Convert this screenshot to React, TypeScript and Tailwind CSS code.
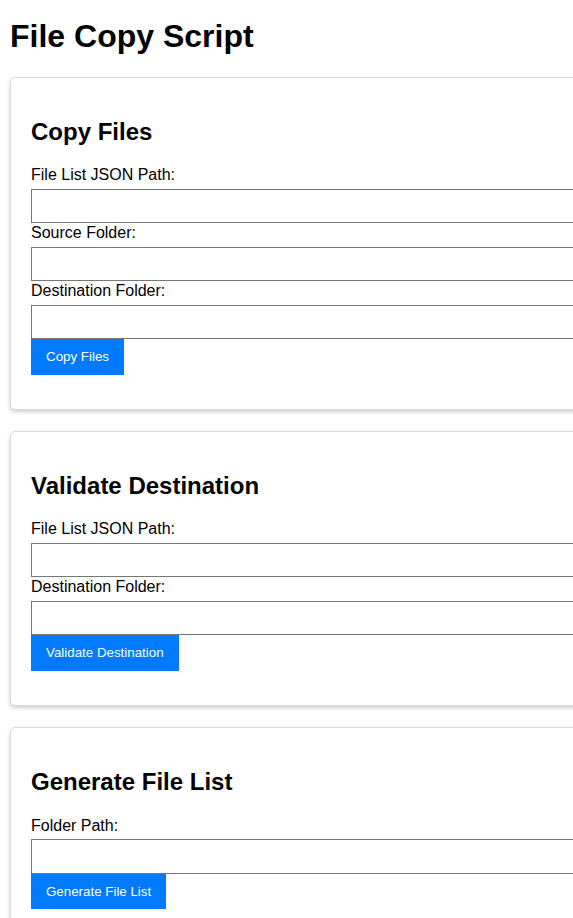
import { useState } from 'react';

type Field = { label: string; name: string };

type Section = {
  title: string;
  fields: Field[];
  action: string;
};

const SECTIONS: Section[] = [
  {
    title: 'Copy Files',
    fields: [
      { label: 'File List JSON Path:', name: 'fileList' },
      { label: 'Source Folder:', name: 'source' },
      { label: 'Destination Folder:', name: 'destination' },
    ],
    action: 'Copy Files',
  },
  {
    title: 'Validate Destination',
    fields: [
      { label: 'File List JSON Path:', name: 'fileList' },
      { label: 'Destination Folder:', name: 'destination' },
    ],
    action: 'Validate Destination',
  },
  {
    title: 'Generate File List',
    fields: [{ label: 'Folder Path:', name: 'folder' }],
    action: 'Generate File List',
  },
];

function Card({ section }: { section: Section }) {
  const [values, setValues] = useState<Record<string, string>>({});

  return (
    <div className="mb-[21px] w-[760px] rounded-[5px] border border-[#ddd] bg-white p-5 shadow-[0_2px_4px_rgba(0,0,0,0.2)]">
      <h2 className="my-[19.92px] text-[24px] font-bold leading-[27.6px] text-black">
        {section.title}
      </h2>
      {section.fields.map((field) => (
        <div key={field.name}>
          <label className="mb-[4px] block pt-[1px] text-[16px] leading-[18.4px] text-black">
            {field.label}
          </label>
          <input
            type="text"
            value={values[field.name] || ''}
            onChange={(e) => setValues((prev) => ({ ...prev, [field.name]: e.target.value }))}
            className="block h-[34.6px] w-full border border-[#767676] bg-white px-2 text-[16px] outline-none"
          />
        </div>
      ))}
      <button className="bg-[#007bff] px-[15px] py-[10px] text-[13.33px] leading-[15.33px] text-white">
        {section.action}
      </button>
      <div className="h-[14.5px]" />
    </div>
  );
}

export default function App() {
  return (
    <div className="min-h-screen w-full overflow-hidden bg-white px-[10px] font-['Liberation_Sans',Arial,sans-serif] text-black">
      <h1 className="mb-[22px] mt-[18px] text-[32px] font-bold leading-[36.8px]">File Copy Script</h1>
      {SECTIONS.map((section) => (
        <Card key={section.title} section={section} />
      ))}
    </div>
  );
}
